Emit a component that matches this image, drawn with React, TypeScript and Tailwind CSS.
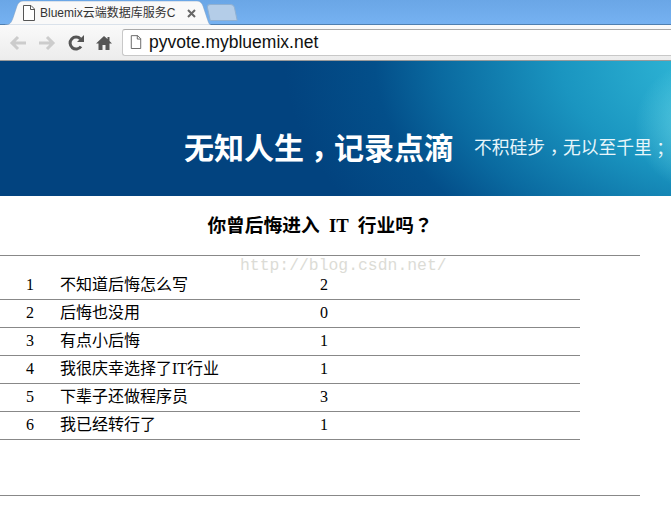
import React from 'react';

const rows = [
  { id: 1, label: '不知道后悔怎么写', votes: 2 },
  { id: 2, label: '后悔也没用', votes: 0 },
  { id: 3, label: '有点小后悔', votes: 1 },
  { id: 4, label: '我很庆幸选择了IT行业', votes: 1 },
  { id: 5, label: '下辈子还做程序员', votes: 3 },
  { id: 6, label: '我已经转行了', votes: 1 },
];

const serif = "font-['Liberation_Serif','Noto_Sans_CJK_SC',serif]";
const punct = "font-['Noto_Sans_CJK_TC',sans-serif]";

const PageIcon: React.FC<{ className?: string }> = ({ className }) => (
  <svg viewBox="0 0 14 17" className={className} fill="none">
    <path d="M1.5 .5H9L12.5 4V15.5H1.5Z" fill="#fff" stroke="#555" />
    <path d="M8.5 .5V4.5H12.5" stroke="#555" />
  </svg>
);

const BrowserBar: React.FC = () => (
  <div className="h-[61px] flex flex-col border-b border-[#9a9a9a]">
    <div className="h-[25px] bg-gradient-to-b from-[#6aa6e6] to-[#76b2f2] shadow-[inset_0_-1px_0_#4f7fb0] flex items-end">
      <div className="relative ml-[5px] h-[24px] w-[206px] flex items-center pl-[17px] pr-[15px] gap-[4px]">
        <svg viewBox="0 0 206 24" className="absolute inset-0 w-[206px] h-[24px]">
          <path d="M0 24C6 24 7 20 9 14L12 5C13 2 15 0 18 0H192C195 0 197 2 198 5L201 14C203 20 204 24 206 24Z" fill="#f9f9f9" stroke="#7d9cc0" strokeWidth=".5" />
        </svg>
        <PageIcon className="relative w-[14px] h-[17px] shrink-0" />
        <span className="relative font-['Liberation_Sans','Noto_Sans_CJK_SC',sans-serif] text-[12px] text-[#333] whitespace-nowrap overflow-hidden flex-1">Bluemix云端数据库服务C</span>
        <svg viewBox="0 0 9 9" className="relative w-[9px] h-[9px]" stroke="#666" strokeWidth="2">
          <path d="M1 1l7 7M8 1L1 8" />
        </svg>
      </div>
      <div className="-ml-[3px] mb-[4px] h-[17px] w-[28px] bg-[#b4cde8] border border-[#8fb0d2] rounded-t-[4px] rounded-b-[1px] skew-x-12" />
    </div>
    <div className="flex-1 flex items-center pl-[9px] gap-[11px] bg-gradient-to-b from-[#fafafa] to-[#ececec]">
      <svg viewBox="0 0 18 16" className="w-[18px] h-[16px]" fill="none" stroke="#ccc" strokeWidth="3">
        <path d="M17 8H3M9 2L3 8l6 6" />
      </svg>
      <svg viewBox="0 0 18 16" className="w-[18px] h-[16px]" fill="none" stroke="#ccc" strokeWidth="3">
        <path d="M1 8h14M9 2l6 6-6 6" />
      </svg>
      <svg viewBox="0 0 18 18" className="w-[18px] h-[18px]" fill="none">
        <path d="M14 12.5A6 6 0 1 1 13.5 5" stroke="#555" strokeWidth="3" />
        <path d="M10 8h7V1Z" fill="#555" />
      </svg>
      <svg viewBox="0 0 16 16" className="w-[16px] h-[16px]" fill="#555">
        <path d="M8 1 0 8.5h2.500V15H6.500V10H9.500V15H13.500V8.500H16L13.500 6V2H11.500V4Z" />
      </svg>
      <div className="flex-1 h-[27px] bg-white border border-[#c8c8c8] border-t-[#aaa] rounded-l-[3px] border-r-0 flex items-center pl-[7px] gap-[7px] -ml-[1px]">
        <PageIcon className="w-[12px] h-[15px] shrink-0" />
        <span className="font-['Liberation_Sans',sans-serif] text-[17.500px] text-[#111]">pyvote.mybluemix.net</span>
      </div>
    </div>
  </div>
);

const Banner: React.FC = () => (
  <div className="h-[135px] flex items-center pt-[35px] pl-[184px] gap-[20px] overflow-hidden whitespace-nowrap font-['Noto_Sans_CJK_SC',sans-serif] bg-[radial-gradient(circle_at_700px_65px,rgba(130,230,240,0.6)_0px,rgba(130,230,240,0)_65px),radial-gradient(ellipse_500px_300px_at_760px_0px,#2bb0d2_18%,#1a95c0_40%,#0a6aa0_64%,#034f8a_77%,#02437f_95%)]">
    <span className="text-[30px] leading-[36px] font-bold text-white">
      无知人生<span className={`${punct} relative top-[8px]`}>，</span>记录点滴
    </span>
    <span className="text-[17.800px] leading-[24px] text-[#e8f6fb]">
      不积硅步<span className={`${punct} relative top-[5px]`}>，</span>无以至千里<span className={`${punct} relative top-[2px]`}>；</span>
    </span>
  </div>
);

export default function App() {
  return (
    <div className="relative w-[671px] h-[511px] overflow-hidden bg-white text-black">
      <BrowserBar />
      <Banner />
      <h1 className={`${serif} w-[640px] h-[60px] pt-[16px] text-center text-[18.720px] leading-[24px] font-bold border-b border-[#888] whitespace-pre [word-spacing:4.700px]`}>
        你曾后悔进入 IT 行业吗<span className={punct}>？</span>
      </h1>
      <div className="w-[580px] pt-[15px]">
        {rows.map((r) => (
          <div key={r.id} className={`${serif} flex h-[28px] items-end pb-[3px] border-b border-[#888] text-[16px] leading-[22px] first:h-[29px]`}>
            <span className="w-[60px] pl-[26px]">{r.id}</span>
            <span className="w-[260px]">{r.label}</span>
            <span>{r.votes}</span>
          </div>
        ))}
      </div>
      <div className="w-[640px] mt-[55px] border-b border-[#888]" />
      <div className="absolute left-[240px] top-[256px] font-['Liberation_Mono',monospace] text-[16.400px] leading-[20px] text-[#dcdcd6] pointer-events-none">
        http://blog.csdn.net/
      </div>
    </div>
  );
}
